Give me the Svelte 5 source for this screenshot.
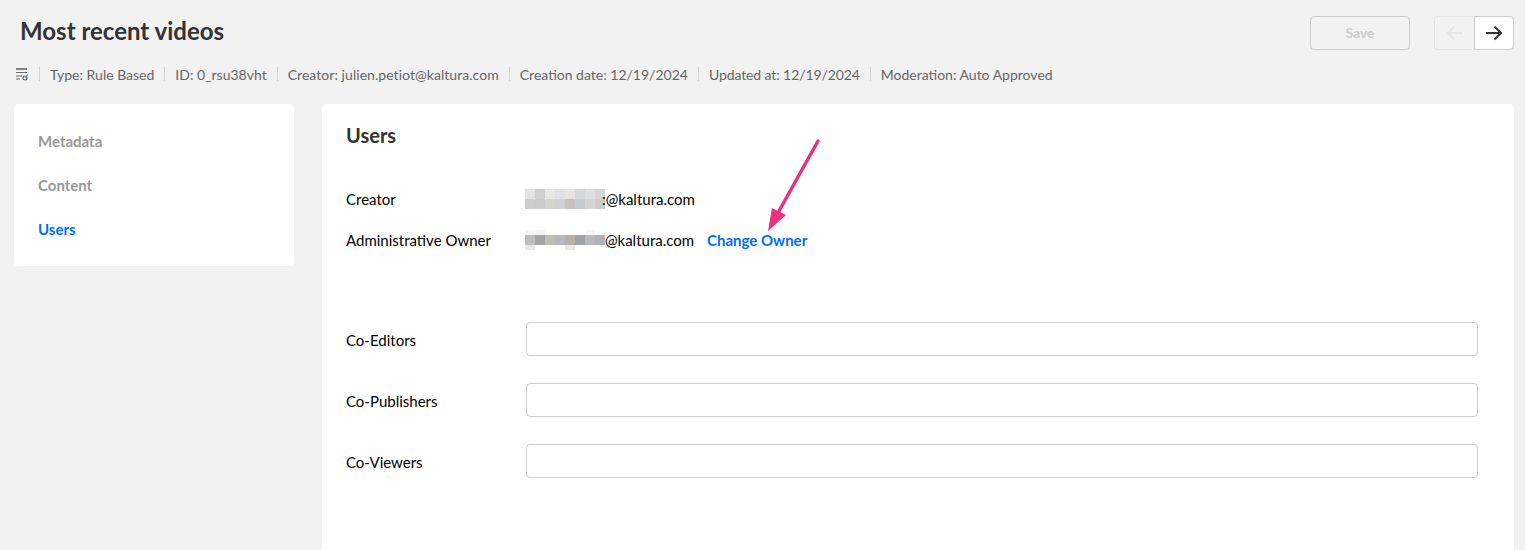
<script lang="ts">
  // Pixelated (redacted) e-mail prefixes, one array per row of 10px cells
  const mosaicCreator = [
    ['#e2e2e2', '#cfcfcf', '#e8e8e6', '#e2e2e6', '#e6e5e2', '#d6d8da', '#dfdfe1', '#d6d6d6'],
    ['#cdcdcd', '#cbcbcb', '#d3d4ce', '#cfd0d5', '#c6c2bd', '#c5cacd', '#d6d5d3', '#cccccc'],
  ];
  const mosaicOwner = [
    ['#f5f5f5', '#f3f3f3', '#ffffff', '#ffffff', '#ffffff', '#ffffff', '#f6f6f6', '#ffffff'],
    ['#bdbdbd', '#a4a4a4', '#bdbeb6', '#b8b8c0', '#b7b2a7', '#9fa3a7', '#b9b9b9', '#b0b2b4'],
    ['#e8e8e8', '#ffffff', '#ffffff', '#ffffff', '#e9e9e9', '#ffffff', '#ffffff', '#ffffff'],
  ];

  const meta = [
    'Type: Rule Based',
    'ID: 0_rsu38vht',
    'Creator: julien.petiot@kaltura.com',
    'Creation date: 12/19/2024',
    'Updated at: 12/19/2024',
    'Moderation: Auto Approved',
  ];

  const navItems = ['Metadata', 'Content', 'Users'];
  const coRoles = ['Co-Editors', 'Co-Publishers', 'Co-Viewers'];
</script>

<div class="page">
  <header class="header">
    <h1>Most recent videos</h1>
    <div class="actions">
      <button class="save" disabled>Save</button>
      <div class="pager">
        <button class="pager__btn pager__btn--off" disabled aria-label="Previous">
          <svg width="18" height="16" viewBox="0 0 18 16" fill="none" stroke="currentColor" stroke-width="2">
            <path d="M17 8H2M8.5 1.5 2 8l6.5 6.5" />
          </svg>
        </button>
        <button class="pager__btn" aria-label="Next">
          <svg width="18" height="16" viewBox="0 0 18 16" fill="none" stroke="currentColor" stroke-width="2">
            <path d="M1 8h15M9.5 1.5 16 8l-6.5 6.5" />
          </svg>
        </button>
      </div>
    </div>
  </header>

  <div class="meta">
    <svg class="meta__icon" width="14" height="13" viewBox="0 0 14 13" fill="none" stroke="#666">
      <path d="M1 1h11" stroke-width="1.6" />
      <path d="M1 4.5h11M1 8h6M1 11h4" stroke-width="1.2" />
      <circle cx="10" cy="10" r="2" stroke-width="1.2" />
      <path d="M12.5 6.5 10.5 10" stroke="#4a7fb5" stroke-width="1.2" />
    </svg>
    {#each meta as item}
      <span class="meta__sep"></span>
      <span
        class="meta__item"
        class:meta__item--wide={item.startsWith('Creator')}
        class:meta__item--tight={item.startsWith('Updated')}
      >{item}</span>
    {/each}
  </div>

  <div class="columns">
    <nav class="sidebar">
      {#each navItems as item}
        <a class="sidebar__item" class:sidebar__item--active={item === 'Users'} href="#{item}">{item}</a>
      {/each}
    </nav>

    <main class="panel">
      <h2>Users</h2>

      <div class="row row--creator">
        <span class="row__label">Creator</span>
        <span class="email">
          <span class="mosaic mosaic--creator">
            {#each mosaicCreator.flat() as color}
              <i style="background: {color}"></i>
            {/each}
          </span><span>:@kaltura.com</span>
        </span>
      </div>

      <div class="row row--owner">
        <span class="row__label">Administrative Owner</span>
        <span class="email">
          <span class="mosaic mosaic--owner">
            {#each mosaicOwner.flat() as color}
              <i style="background: {color}"></i>
            {/each}
          </span><span>@kaltura.com</span>
        </span>
        <a class="change" href="#owner">Change Owner</a>
      </div>

      <div class="co-list">
        {#each coRoles as role}
          <label class="co-row">
            <span class="row__label">{role}</span>
            <input type="text" />
          </label>
        {/each}
      </div>
    </main>
  </div>

  <!-- annotation drawn over the screenshot -->
  <svg class="arrow" width="70" height="110" viewBox="0 0 70 110" fill="#ec2f7e">
    <path d="M58 10 L19 80" stroke="#ec2f7e" stroke-width="3.4" stroke-linecap="round" />
    <path d="M8 100 L12 77 L26 84 Z" />
  </svg>
</div>

<style>
  :global(body) {
    margin: 0;
    background: #f2f2f2;
  }

  .page {
    position: relative;
    height: 550px;
    overflow: hidden;
    box-sizing: border-box;
    padding: 16px 11px 0 14px;
    font-family: Lato, 'Open Sans', sans-serif;
    color: #333;
  }

  .header {
    display: flex;
    justify-content: space-between;
    align-items: flex-start;
    height: 34px;
  }

  h1 {
    margin: 0 0 0 6px;
    font-size: 24px;
    line-height: 30px;
    font-weight: 700;
    color: #333;
  }

  .actions {
    display: flex;
    gap: 24px;
  }

  .save {
    width: 100px;
    height: 34px;
    padding: 0 0 2px;
    box-sizing: border-box;
    border: 1px solid #ccc;
    border-radius: 4px;
    background: transparent;
    font-family: inherit;
    font-size: 14px;
    font-weight: 700;
    color: #ccc;
  }

  .pager {
    display: flex;
  }

  .pager__btn {
    display: flex;
    align-items: center;
    justify-content: center;
    width: 40px;
    height: 34px;
    padding: 0;
    box-sizing: border-box;
    border: 1px solid #ccc;
    border-radius: 0 4px 4px 0;
    background: #fff;
    color: #333;
  }

  .pager__btn--off {
    border-color: #e6e6e6;
    border-right: none;
    border-radius: 4px 0 0 4px;
    background: transparent;
    color: #e6e6e6;
  }

  .meta {
    display: flex;
    align-items: center;
    height: 18px;
    margin-top: 15px;
    margin-left: 1px;
    font-size: 14px;
    color: #666;
  }

  .meta__icon {
    margin-right: 10px;
  }

  .meta__sep {
    width: 1px;
    height: 14px;
    margin-right: 10px;
    background: #d4d4d4;
  }

  .meta__item {
    margin-right: 10px;
  }

  .meta__item--wide {
    letter-spacing: 0.05px;
  }

  .meta__item--tight {
    letter-spacing: -0.1px;
  }

  .columns {
    display: flex;
    gap: 28px;
    align-items: flex-start;
    margin-top: 21px;
  }

  .sidebar {
    display: flex;
    flex-direction: column;
    gap: 26px;
    width: 280px;
    height: 162px;
    box-sizing: border-box;
    padding: 28px 24px;
    border-radius: 4px;
    background: #fff;
  }

  .sidebar__item {
    font-size: 15px;
    line-height: 18px;
    font-weight: 700;
    color: #999;
    text-decoration: none;
  }

  .sidebar__item--active {
    color: #006efa;
  }

  .panel {
    flex: 1;
    height: 460px;
    box-sizing: border-box;
    padding: 19px 36px 0 24px;
    border-radius: 4px;
    background: #fff;
  }

  h2 {
    margin: 0;
    font-size: 20px;
    line-height: 25px;
    font-weight: 700;
    color: #333;
  }

  .row {
    display: flex;
    align-items: center;
    font-size: 15px;
    color: #000;
  }

  .row--creator {
    height: 20px;
    margin-top: 41px;
  }

  .row--owner {
    height: 20px;
    margin-top: 21px;
  }

  .row__label {
    flex: none;
    width: 179px;
    font-size: 15px;
    color: #000;
  }

  .email {
    display: flex;
    align-items: center;
  }

  .mosaic {
    display: grid;
    grid-template-columns: repeat(8, 10px);
    margin-right: -3px;
  }

  .mosaic--creator {
    grid-auto-rows: 10px;
  }

  .mosaic--owner {
    grid-template-rows: 5px 10px 5px;
    margin-right: 0;
  }

  .change {
    margin-left: 13px;
    font-size: 15px;
    font-weight: 700;
    color: #006efa;
    text-decoration: none;
  }

  .co-list {
    display: flex;
    flex-direction: column;
    gap: 27px;
    margin-top: 72px;
  }

  .co-row {
    display: flex;
    align-items: center;
  }

  .co-row .row__label {
    width: 180px;
    padding-top: 1px;
  }

  input {
    flex: 1;
    min-width: 0;
    height: 34px;
    box-sizing: border-box;
    border: 1px solid #ccc;
    border-radius: 4px;
    background: #fff;
  }

  .arrow {
    position: absolute;
    left: 760px;
    top: 131px;
  }
</style>
